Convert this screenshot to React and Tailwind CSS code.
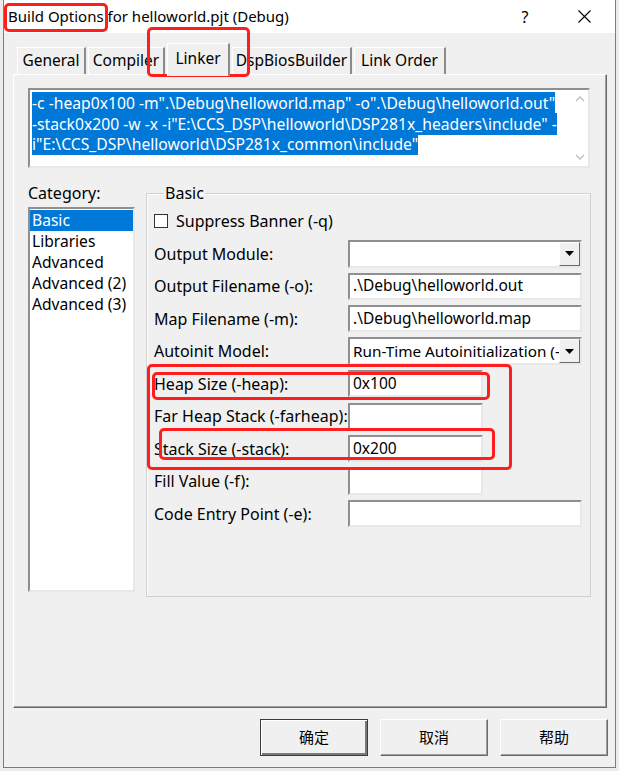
import React from "react";

const font = "font-['Noto_Sans','Noto_Sans_CJK_SC',sans-serif]";

const sunken =
  "bg-white border-2 border-t-[#8f8f8f] border-l-[#8f8f8f] border-r-[#e8e8e8] border-b-[#e8e8e8]";

function Field({ value, short }) {
  return (
    <div
      className={`${short ? "w-[135px]" : "w-[234px]"} h-[27px] ${sunken} flex items-center pl-[3px] text-[15.5px] text-black whitespace-nowrap overflow-hidden`}
    >
      {value}
    </div>
  );
}

function Combo({ value }) {
  return (
    <div className={`w-[234px] h-[28px] ${sunken} flex items-center`}>
      <div className="flex-1 min-w-0 pl-[3px] text-[15.3px] text-black whitespace-nowrap overflow-hidden">
        {value}
      </div>
      <div className="w-[21px] shrink-0 h-full bg-[#f0f0f0] border border-t-white border-l-white border-r-[#696969] border-b-[#696969] flex items-center justify-center">
        <svg width="9" height="5" viewBox="0 0 9 5">
          <path d="M0 0 H9 L4.5 5 Z" fill="#000" />
        </svg>
      </div>
    </div>
  );
}

function Row({ label, children }) {
  return (
    <div className="flex items-center h-[27px]">
      <div className="w-[194px] text-[16px] text-black whitespace-nowrap">{label}</div>
      {children}
    </div>
  );
}

function Tab({ label, w, active }) {
  return (
    <div
      className={`${w} flex items-center justify-center text-[15.5px] text-black bg-[#f0f0f0] border-t border-l border-white border-r-2 border-r-[#8a8a8a] ${
        active ? "h-[33px] -mb-[2px] relative z-10 pb-[3px]" : "h-[27px]"
      }`}
    >
      {label}
    </div>
  );
}

function Btn({ label, def }) {
  return (
    <div
      className={`w-[108px] h-[37px] flex items-center justify-center bg-[#f0f0f0] text-[15px] text-black border ${
        def
          ? "border-[#3c3c3c] shadow-[inset_1px_1px_0_#fff,inset_-2px_-2px_0_#7a7a7a]"
          : "border-t-white border-l-white border-r-[#696969] border-b-[#696969] shadow-[inset_-1px_-1px_0_#a0a0a0]"
      }`}
    >
      {label}
    </div>
  );
}

export default function App() {
  const items = ["Basic", "Libraries", "Advanced", "Advanced (2)", "Advanced (3)"];
  return (
    <div className={`relative w-[619px] h-[771px] bg-[#ececec] overflow-hidden ${font}`}>
      <div className="ml-[3px] w-[613px] h-[768px] flex flex-col bg-[#f0f0f0] border-x border-b border-[#7c7c7c]">
        {/* title bar */}
        <div className="h-[33px] bg-white flex items-center pl-[4px] shrink-0">
          <div className="text-[15px] text-black whitespace-nowrap">
            Build Options for helloworld.pjt (Debug)
          </div>
          <div className="ml-auto w-[30px] text-center text-[16px] text-black mr-[29px]">?</div>
          <div className="w-[30px] flex justify-center mr-[16px]">
            <svg width="13" height="13" viewBox="0 0 13 13">
              <path d="M0.5 0.5 L12.5 12.5 M12.5 0.5 L0.5 12.5" stroke="#000" strokeWidth="1.1" />
            </svg>
          </div>
        </div>

        <div className="flex-1 pl-[9px] pr-[8px] flex flex-col">
          {/* tabs */}
          <div className="mt-[10px] h-[31px] flex items-end gap-[2px] pl-[4px]">
            <Tab label="General" w="w-[69px]" />
            <Tab label="Compiler" w="w-[77px]" />
            <Tab label="Linker" w="w-[63px]" active />
            <Tab label="DspBiosBuilder" w="w-[120px]" />
            <Tab label="Link Order" w="w-[92px]" />
          </div>

          {/* tab panel */}
          <div className="h-[634px] border-t border-l border-white border-r border-b border-r-[#696969] border-b-[#696969] shadow-[inset_-1px_-1px_0_#a0a0a0] pl-[14px] pt-[13px]">
            {/* command line */}
            <div className={`w-[562px] h-[80px] ${sunken} flex`}>
              <div className="flex-1 pl-[2px] pt-[3px] text-[15.7px] leading-[20.7px] whitespace-nowrap overflow-hidden">
                <div>
                  <span className="bg-[#0078d7] text-white">
                    -c -heap0x100 -m".\Debug\helloworld.map" -o".\Debug\helloworld.out"
                  </span>
                </div>
                <div>
                  <span className="bg-[#0078d7] text-white">
                    -stack0x200 -w -x -i"E:\CCS_DSP\helloworld\DSP281x_headers\include" -
                  </span>
                </div>
                <div>
                  <span className="bg-[#0078d7] text-white">
                    i"E:\CCS_DSP\helloworld\DSP281x_common\include"
                  </span>
                </div>
              </div>
              <div className="w-[17px] flex flex-col items-center justify-between py-[6px]">
                <svg width="10" height="6" viewBox="0 0 10 6">
                  <path d="M1 5 L5 1 L9 5" stroke="#c4c4c4" strokeWidth="1.6" fill="none" />
                </svg>
                <svg width="10" height="6" viewBox="0 0 10 6">
                  <path d="M1 1 L5 5 L9 1" stroke="#c4c4c4" strokeWidth="1.6" fill="none" />
                </svg>
              </div>
            </div>

            <div className="mt-[15px] flex gap-[11px]">
              {/* category */}
              <div className="w-[107px]">
                <div className="h-[20px] flex items-center text-[16px] text-black">Category:</div>
                <div className={`mt-[4px] h-[385px] ${sunken} pt-[1px] text-[15.6px] text-black`}>
                  {items.map((it, i) => (
                    <div
                      key={it}
                      className={`h-[21px] leading-[21px] pl-[2px] whitespace-nowrap ${
                        i === 0 ? "bg-[#0078d7] text-white" : ""
                      }`}
                    >
                      {it}
                    </div>
                  ))}
                </div>
              </div>

              {/* basic group */}
              <fieldset className="w-[445px] h-[414px] border border-[#d0d0d0] shadow-[inset_1px_1px_0_#fff] px-[7px]">
                <legend className="ml-[10px] px-[1px] text-[16px] text-black leading-[20px]">Basic</legend>
                <div className="mt-[8px] h-[20px] flex items-center">
                  <div className="w-[14px] h-[14px] bg-white border border-[#333]" />
                  <div className="ml-[8px] text-[16px] text-black">Suppress Banner (-q)</div>
                </div>
                <div className="mt-[9px] flex flex-col gap-[5.5px]">
                  <Row label="Output Module:">
                    <Combo value="" />
                  </Row>
                  <Row label="Output Filename (-o):">
                    <Field value=".\Debug\helloworld.out" />
                  </Row>
                  <Row label="Map Filename (-m):">
                    <Field value=".\Debug\helloworld.map" />
                  </Row>
                  <Row label="Autoinit Model:">
                    <Combo value="Run-Time Autoinitialization (-c)" />
                  </Row>
                  <Row label="Heap Size (-heap):">
                    <Field value="0x100" short />
                  </Row>
                  <Row label="Far Heap Stack (-farheap):">
                    <Field value="" short />
                  </Row>
                  <Row label="Stack Size (-stack):">
                    <Field value="0x200" short />
                  </Row>
                  <Row label="Fill Value (-f):">
                    <Field value="" short />
                  </Row>
                  <Row label="Code Entry Point (-e):">
                    <Field value="" />
                  </Row>
                </div>
              </fieldset>
            </div>
          </div>

          {/* buttons */}
          <div className="mt-[11px] flex justify-end gap-[12px] -mr-[1px]">
            <Btn label="确定" def />
            <Btn label="取消" />
            <Btn label="帮助" />
          </div>
        </div>
      </div>

      {/* red annotation boxes */}
      <div className="absolute left-[4px] top-[3px] w-[104px] h-[29px] border-[3px] border-[#ff1e1e] rounded-[5px]" />
      <div className="absolute left-[147px] top-[27px] w-[103px] h-[50px] border-[3px] border-[#ff1e1e] rounded-[5px]" />
      <div className="absolute left-[147px] top-[364px] w-[365px] h-[106px] border-[3px] border-[#ff1e1e] rounded-[5px]" />
      <div className="absolute left-[152px] top-[372px] w-[338px] h-[28px] border-[3px] border-[#ff1e1e] rounded-[5px]" />
      <div className="absolute left-[159px] top-[428px] w-[336px] h-[32px] border-[3px] border-[#ff1e1e] rounded-[5px]" />
    </div>
  );
}
